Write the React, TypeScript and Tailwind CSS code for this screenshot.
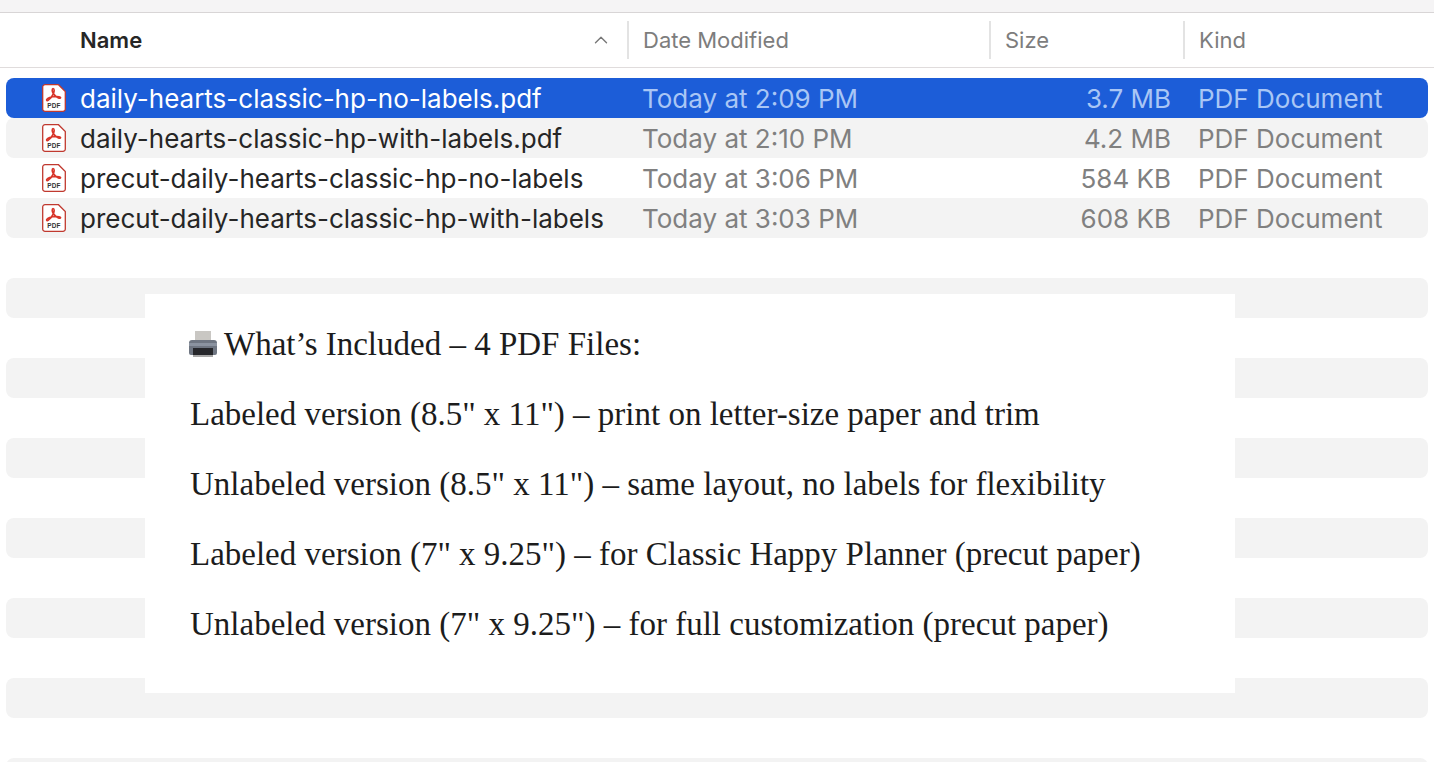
import { ChevronUp } from "lucide-react";

const files = [
  { name: "daily-hearts-classic-hp-no-labels.pdf", date: "Today at 2:09 PM", size: "3.7 MB" },
  { name: "daily-hearts-classic-hp-with-labels.pdf", date: "Today at 2:10 PM", size: "4.2 MB" },
  { name: "precut-daily-hearts-classic-hp-no-labels", date: "Today at 3:06 PM", size: "584 KB" },
  { name: "precut-daily-hearts-classic-hp-with-labels", date: "Today at 3:03 PM", size: "608 KB" },
];

const included = [
  'Labeled version (8.5" x 11") – print on letter-size paper and trim',
  'Unlabeled version (8.5" x 11") – same layout, no labels for flexibility',
  'Labeled version (7" x 9.25") – for Classic Happy Planner (precut paper)',
  'Unlabeled version (7" x 9.25") – for full customization (precut paper)',
];

const PdfIcon = () => (
  <div className="relative h-[28px] w-[24px]">
    <svg viewBox="0 0 24 28" className="absolute inset-0 h-full w-full">
      <path
        d="M3 .7h13.5L23.3 7.5V25a2.3 2.3 0 0 1-2.3 2.3H3A2.3 2.3 0 0 1 .7 25V3A2.3 2.3 0 0 1 3 .7z"
        fill="#fff"
        stroke="#c0392f"
        strokeWidth="1.3"
      />
      <path
        d="M11 4.5c1.6 0 1.4 3 .4 5.2-1 2.3-3 5.2-5 6.5-1.2.8-2.2.2-1.6-.8.9-1.4 5-2.6 9-2.9 2-.1 5 .2 4.8 1.2-.2 1-2.6.4-4.4-1-2-1.6-4-4.6-4-6.5 0-.9.3-1.7.8-1.7z"
        fill="none"
        stroke="#d8352a"
        strokeWidth="1.6"
      />
    </svg>
    <span className="absolute inset-x-0 top-[17px] text-center font-['Liberation_Sans',sans-serif] text-[8px] leading-[9px] font-bold tracking-[0.2px] text-[#333] [transform:scaleX(0.8)]">
      PDF
    </span>
  </div>
);

const Printer = () => (
  <svg viewBox="0 0 30 30" className="mr-[6px] h-[30px] w-[30px] shrink-0">
    <path d="M7 2h16v11H7z" fill="#c9c7c3" />
    <path d="M4 11h22a3 3 0 0 1 3 3v10a2 2 0 0 1-2 2H3a2 2 0 0 1-2-2V14a3 3 0 0 1 3-3z" fill="#6f7682" />
    <path d="M1 14h28v3H1z" fill="#8b93a0" />
    <path d="M5 19h20v8H5z" fill="#26272b" />
    <path d="M5 26h20v2H5z" fill="#a8a8a8" />
  </svg>
);

const Row = ({ file, index }: { file?: (typeof files)[number]; index: number }) => {
  const selected = index === 0;
  const striped = index % 2 === 1;
  return (
    <div
      className={`flex h-[40px] shrink-0 items-center rounded-lg text-[26px] ${
        selected ? "bg-[#1c5dd8]" : striped ? "bg-[#f3f3f3]" : "bg-white"
      }`}
    >
      {file && (
        <>
          <div className="ml-[36px] flex w-[38px] justify-start">
            <PdfIcon />
          </div>
          <div className={`w-[562px] whitespace-nowrap ${selected ? "text-white" : "text-[#262626]"}`}>{file.name}</div>
          <div className={`w-[400px] whitespace-nowrap ${selected ? "text-[#a9c6f5]" : "text-[#808080]"}`}>{file.date}</div>
          <div className={`w-[129px] text-right whitespace-nowrap ${selected ? "text-[#a9c6f5]" : "text-[#808080]"}`}>{file.size}</div>
          <div className={`ml-[27px] whitespace-nowrap ${selected ? "text-[#a9c6f5]" : "text-[#808080]"}`}>PDF Document</div>
        </>
      )}
    </div>
  );
};

const App = () => {
  const rows = Array.from({ length: 18 }, (_, i) => i);
  return (
    <div className="relative h-[762px] w-[1434px] overflow-hidden bg-white font-['Inter',sans-serif]">
      <div className="h-[13px] border-b border-[#d8d5d6] bg-[#f5f4f5]" />
      <div className="flex h-[55px] items-center border-b border-[#e0dcdc] text-[22px] text-[#7d7d7d]">
        <div className="ml-[80px] w-[500px] font-semibold text-[#262626]">Name</div>
        <ChevronUp className="ml-[10px] text-[#777]" size={22} strokeWidth={1.5} />
        <div className="ml-[15px] h-[38px] w-[2px] bg-[#e3e3e3]" />
        <div className="ml-[14px] w-[346px]">Date Modified</div>
        <div className="h-[38px] w-[2px] bg-[#e3e3e3]" />
        <div className="ml-[14px] w-[178px]">Size</div>
        <div className="h-[38px] w-[2px] bg-[#e3e3e3]" />
        <div className="ml-[14px]">Kind</div>
      </div>
      <div className="mx-[6px] mt-[10px] flex flex-col">
        {rows.map((i) => (
          <Row key={i} index={i} file={files[i]} />
        ))}
      </div>
      <div className="absolute top-[294px] left-[145px] flex h-[399px] w-[1090px] flex-col bg-white pt-[30px] pl-[43px] font-['Liberation_Serif',serif] text-[33px] leading-[40px] text-[#1c1c1c]">
        <div className="flex h-[40px] items-center whitespace-nowrap">
          <Printer />
          What’s Included – 4 PDF Files:
        </div>
        {included.map((line) => (
          <div key={line} className="mt-[30px] h-[40px] pl-[2px] whitespace-nowrap">
            {line}
          </div>
        ))}
      </div>
    </div>
  );
};

export default App;
